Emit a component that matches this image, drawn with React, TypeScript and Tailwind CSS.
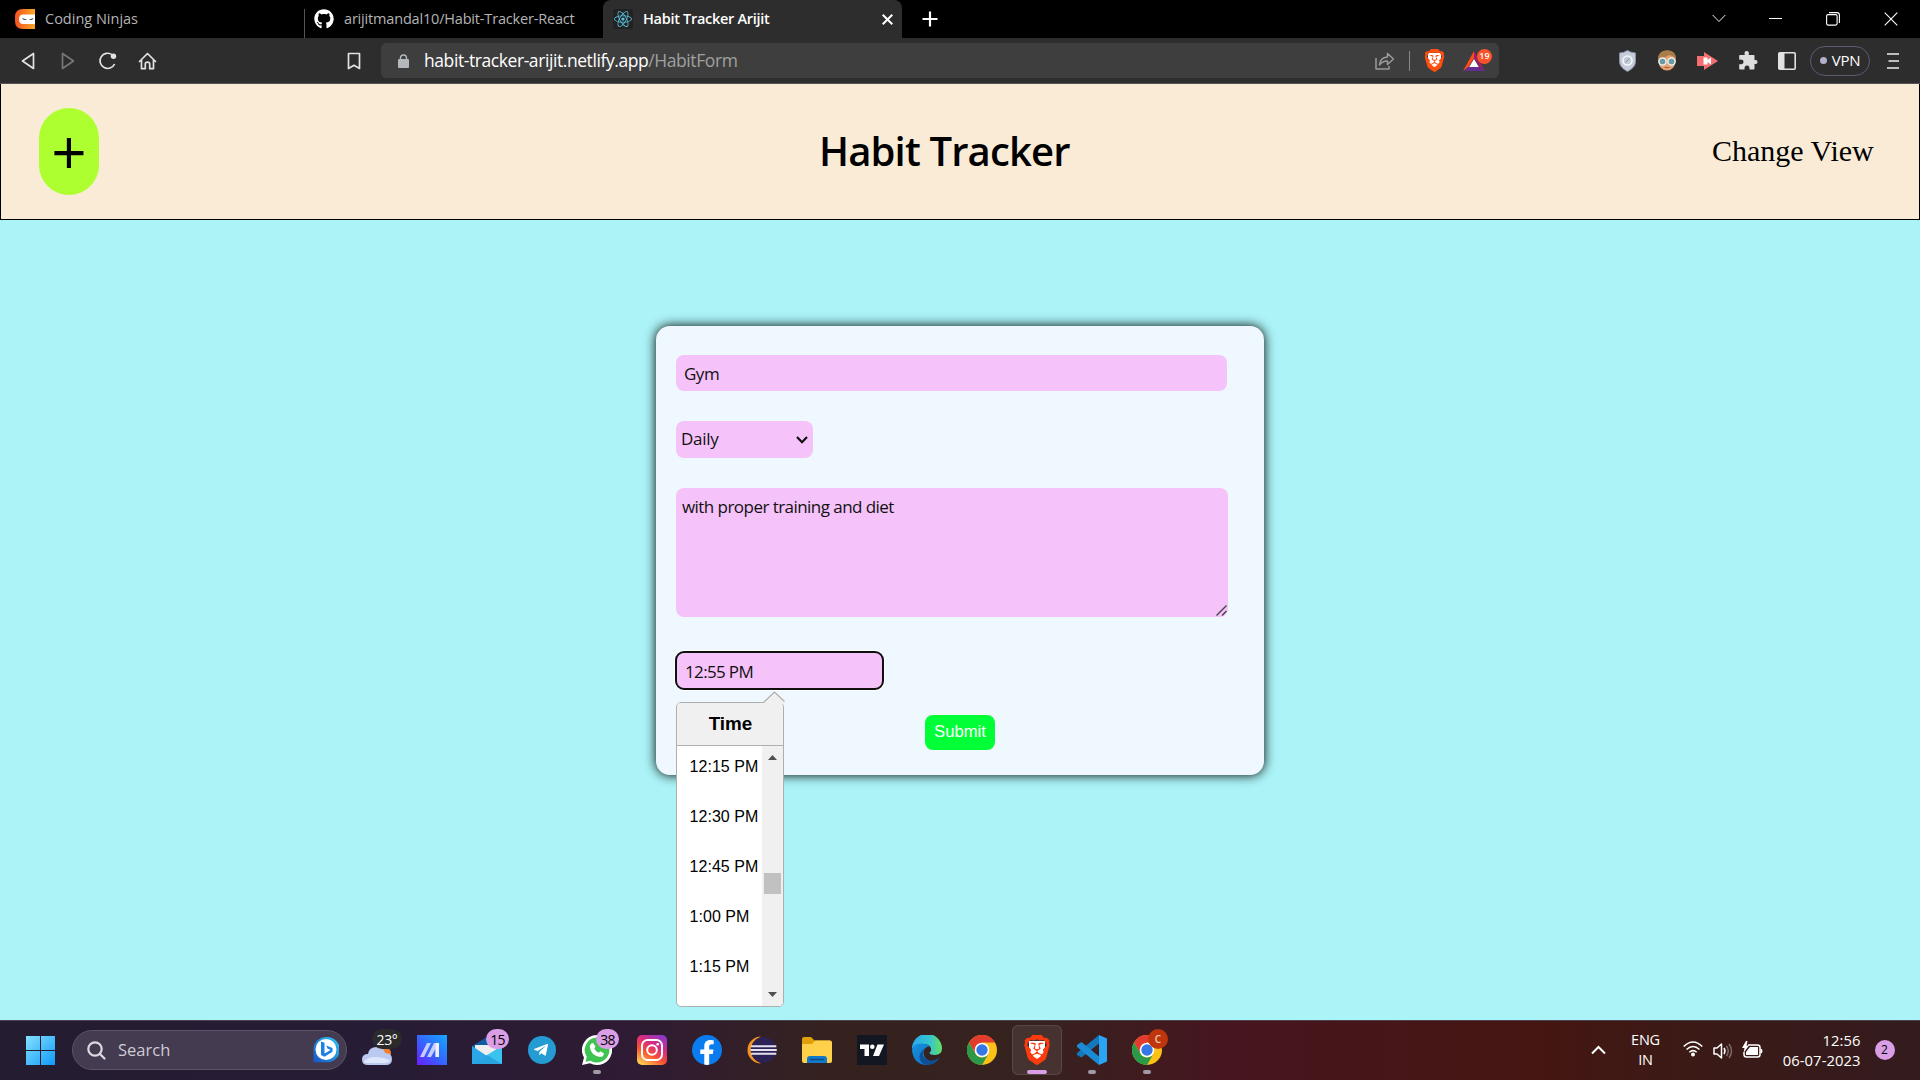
import type { ReactNode } from "react";
import { FaGithub, FaReact, FaTelegramPlane, FaFacebookF } from "react-icons/fa";
import { SiBrave } from "react-icons/si";

const ui = "font-['Open_Sans','Noto_Sans',sans-serif]";

function CodingNinjasIcon() {
  return (
    <svg width="20" height="20" viewBox="0 0 20 20">
      <defs>
        <linearGradient id="cn" x1="0" x2="1"><stop offset="0" stopColor="#f4511e" /><stop offset="1" stopColor="#f9a825" /></linearGradient>
      </defs>
      <path d="M8 0h12v20H8q-8 0-8-8V8q0-8 8-8Z" fill="url(#cn)" />
      <path d="M8 5.500h12v9.500H8q-4 0-4-4.700t4-4.800Z" fill="#fff" />
      <path d="M7 9l5 1.800q-4 .6-5-1.800ZM18.500 9l-4.500 1.800q4 .6 4.500-1.800Z" fill="#222" />
    </svg>
  );
}

function TabBar() {
  return (
    <div className="flex h-[38px] bg-black text-[#b4b4b4]">
      <div className="flex w-[304px] items-center pl-[15px]">
        <CodingNinjasIcon />
        <span className="ml-[10px] text-[14.500px]">Coding Ninjas</span>
      </div>
      <div className="mt-[9px] w-px bg-[#555]" />
      <div className="flex w-[298px] items-center pl-[9px]">
        <FaGithub className="size-5 shrink-0 text-white" />
        <span className="ml-[10px] whitespace-nowrap text-[14.500px] tracking-[-0.180px]">arijitmandal10/Habit-Tracker-React</span>
      </div>
      <div className="flex w-[299px] items-center rounded-t-lg bg-[#2d2d2d] pl-[10px] text-white">
        <div className="flex size-5 items-center justify-center rounded-xs bg-[#222]">
          <FaReact className="size-[18px] text-[#5bc4dc]" />
        </div>
        <span className="ml-[10px] w-[239px] text-[14.500px] font-semibold tracking-[-0.300px]">Habit Tracker Arijit</span>
        <svg width="11" height="11" viewBox="0 0 11 11" stroke="#fff" strokeWidth="2"><path d="M.7.7l9.600 9.600M10.300.7L.7 10.300" /></svg>
      </div>
      <svg className="mt-[11px] ml-5" width="16" height="16" viewBox="0 0 16 16" stroke="#fff" strokeWidth="2.200"><path d="M8 .5v15M.5 8h15" /></svg>
      <svg className="mt-[14px] ml-[774px]" width="14" height="9" viewBox="0 0 14 9" fill="none" stroke="#eee"><path d="M.7 1l6.300 6.500L13.300 1" /></svg>
      <svg className="mt-[12px] ml-[43px]" width="13" height="14" viewBox="0 0 13 14" stroke="#fff"><path d="M0 6.500h13" /></svg>
      <svg className="mt-[12px] ml-[44px]" width="14" height="14" viewBox="0 0 14 14" fill="none" stroke="#fff" strokeWidth="1.100">
        <rect x=".6" y="2.600" width="10.500" height="10.500" rx="1.500" />
        <path d="M3 .6h8q2.400 0 2.400 2.400v8" />
      </svg>
      <svg className="mt-[12px] ml-[44px]" width="14" height="14" viewBox="0 0 14 14" stroke="#fff" strokeWidth="1.100"><path d="M.7.7l12.600 12.600M13.300.7L.7 13.300" /></svg>
    </div>
  );
}

function Toolbar() {
  return (
    <div className="flex h-[46px] items-center border-b border-[#555] bg-[#2d2d2d]">
      <svg className="ml-[21px] shrink-0" width="14" height="18" viewBox="0 0 14 18" fill="none" stroke="#e2e2e2" strokeWidth="1.700" strokeLinejoin="round"><path d="M12.500 1.500v15L1.500 9Z" /></svg>
      <svg className="ml-[26px] shrink-0" width="14" height="18" viewBox="0 0 14 18" fill="none" stroke="#777" strokeWidth="1.700" strokeLinejoin="round"><path d="M1.500 1.500v15L12.500 9Z" /></svg>
      <svg className="ml-[24px] shrink-0" width="18" height="18" viewBox="0 0 18 18" fill="none" stroke="#e2e2e2" strokeWidth="1.700">
        <path d="M13 2.600A7.600 7.600 0 1 0 15.600 12" /><circle cx="14.500" cy="4.300" r="2.700" fill="#e2e2e2" stroke="none" />
      </svg>
      <svg className="ml-[21px] shrink-0" width="19" height="18" viewBox="0 0 19 18" fill="none" stroke="#e2e2e2" strokeWidth="1.700" strokeLinejoin="round" strokeLinecap="round">
        <path d="M1.500 9.500l8-8 8 8M3.500 8v8.700h3.800V12q0-1.800 2.200-1.800t2.200 1.800v4.700h3.800V8" />
      </svg>
      <svg className="ml-[190px] shrink-0" width="14" height="18" viewBox="0 0 14 18" fill="none" stroke="#e2e2e2" strokeWidth="1.700" strokeLinejoin="round"><path d="M1.500 1.500h11v15L7 13.300 1.500 16.500Z" /></svg>
      <div className="ml-5 flex h-[35px] w-[1118px] shrink-0 items-center rounded-[5px] bg-[#3e3e3e] pl-[17px]">
        <svg width="11" height="14" viewBox="0 0 11 14" fill="none"><rect y="5" width="11" height="9" rx="1" fill="#b4b8bc" /><path d="M2.500 6V3.800q0-2.800 3-2.800t3 2.800V6" stroke="#b4b8bc" strokeWidth="1.400" /></svg>
        <span className="ml-[15px] w-[951px] text-[17.500px] tracking-[-0.420px] text-white">
          habit-tracker-arijit.netlify.app<span className="text-[#a0a0a0]">/HabitForm</span>
        </span>
        <svg width="20" height="18" viewBox="0 0 20 18" fill="none" stroke="#9b9b9b" strokeWidth="1.500" strokeLinejoin="round">
          <path d="M1 6v11h13v-3" /><path d="M4.500 13Q5 5.500 12.500 5V1.500l6 5.500-6 5.500V9Q7.500 8.800 4.500 13Z" />
        </svg>
        <div className="ml-[14px] h-5 w-px bg-[#888]" />
        <div className="relative ml-[13px] size-[23px] shrink-0">
          <div className="absolute top-[4px] left-[5px] h-[14px] w-[13px] bg-white" />
          <SiBrave className="relative size-[23px] text-[#ff4f0f]" />
        </div>
        <div className="relative ml-[17px] h-[20px] w-[22px] shrink-0">
          <svg width="22" height="20" viewBox="0 0 24 20" preserveAspectRatio="none"><path d="M12 0L0 20l6-4 6-9Z" fill="#ff4a1c" /><path d="M12 0l12 20-6-4-6-9Z" fill="#9e1f63" /><path d="M0 20h24l-6-4H6Z" fill="#662d91" /><path d="M12 8l5.200 8H6.800Z" fill="#fff" /></svg>
          <span className="absolute -top-[2px] left-[14px] flex size-[15px] items-center justify-center rounded-full bg-[#fb542b] text-[9px] font-semibold text-white">19</span>
        </div>
      </div>
      <svg className="ml-[120px] shrink-0" width="17" height="22" viewBox="0 0 17 22"><path d="M8.500.5Q12 2.800 16.500 3v8.500q0 6-8 10-8-4-8-10V3Q5 2.800 8.500.5Z" fill="#c5cbd9" stroke="#8891a8" /><circle cx="8.500" cy="10.500" r="4.500" fill="none" stroke="#f4f6fb" strokeWidth="1.600" /><path d="M6.500 12.500l4-4" stroke="#8790a5" /></svg>
      <svg className="ml-[21px] shrink-0" width="20" height="21" viewBox="0 0 20 21"><path d="M1.500 12Q0 1 10 .5 20 1 18.500 12Q17 20.500 10 20.500T1.500 12Z" fill="#e0a274" /><path d="M1 10Q.5 1 10 .5T19 10q-1-4-7-5-4 3-11 5Z" fill="#a97d48" /><circle cx="5.500" cy="11.500" r="3.600" fill="#699ba5" stroke="#eee" strokeWidth="1.500" /><circle cx="14.500" cy="11.500" r="3.600" fill="#699ba5" stroke="#eee" strokeWidth="1.500" /><path d="M7.500 17.500h5" stroke="#b45e42" /></svg>
      <svg className="ml-[20px] shrink-0" width="21" height="20" viewBox="0 0 21 20"><path d="M0 5h7V1l14 9-14 9v-4H0Z" fill="#f36f70" /><path d="M6.500 6.500h4V9L14 6.500v7L10.500 11v2.500h-4Z" fill="#fff" /></svg>
      <svg className="ml-[20px] shrink-0" width="20" height="21" viewBox="0 0 20 21"><path d="M2 5h4.800Q5.800 1 8.700 1t2 4h5q.8 0 .8.800v4.500Q19.500 9.400 19.500 12t-3 1.800v5q0 .8-.8.800h-4.200Q11.800 15.500 9 15.500T6.500 19.600H2q-.8 0-.8-.8v-4.500q4.300.3 4.300-2.400T1.200 9.700V5.800Q1.200 5 2 5Z" fill="#dedede" /></svg>
      <svg className="ml-[20px] shrink-0" width="18" height="18" viewBox="0 0 18 18"><rect x=".8" y=".8" width="16.400" height="16.400" rx="1" fill="none" stroke="#e2e2e2" strokeWidth="1.600" /><path d="M1 1h5.500v16H1Z" fill="#e2e2e2" /></svg>
      <div className="ml-[14px] flex h-[30px] w-[60px] shrink-0 items-center justify-center gap-[5px] rounded-full border border-[#5d5b73] text-[15px] tracking-[-0.300px] text-white">
        <span className="size-[7px] rounded-full bg-[#b3b0cc]" />VPN
      </div>
      <svg className="ml-[17px] shrink-0" width="12" height="16" viewBox="0 0 12 16" stroke="#eee" strokeWidth="1.700"><path d="M0 1h12M1.500 8H12M0 15h12" /></svg>
    </div>
  );
}

function Header() {
  return (
    <header className="flex h-[136px] items-center border-x border-b border-black bg-[#faebd7] text-black">
      <button className="ml-[38px] flex h-[87px] w-[60px] items-center justify-center rounded-[30px] bg-[#adff2f] text-[62px] leading-none">
        <span className="pb-[1px]">+</span>
      </button>
      <h1 className="ml-[720px] w-[800px] pb-[1px] text-[40px] font-semibold tracking-[-0.850px]">Habit Tracker</h1>
      <span className="ml-[93px] whitespace-nowrap pb-[2px] font-['Liberation_Serif',serif] text-[30px]">Change View</span>
    </header>
  );
}

const times = ["12:15 PM", "12:30 PM", "12:45 PM", "1:00 PM", "1:15 PM"];

function TimePicker() {
  return (
    <div className="absolute top-[51px] left-px h-[305px] w-[108px] rounded-[5px] border border-[#aeaeae] bg-white font-['Liberation_Sans',sans-serif] text-black">
      <svg className="absolute -top-[12px] left-[86px]" width="22" height="13" viewBox="0 0 22 13"><path d="M1 11.500L11.500 1 21 10.500v2.500H1Z" fill="#f0f0f0" /><path d="M1 11L11.500 1 21.500 10.500" fill="none" stroke="#aeaeae" strokeWidth="1.200" /></svg>
      <div className="flex h-[43px] items-center justify-center rounded-t-[4px] border-b border-[#aeaeae] bg-[#f0f0f0] pl-px text-[18.880px] font-bold tracking-normal">Time</div>
      <div className="flex h-[260px]">
        <ul className="w-[85px] overflow-hidden pt-[5px]">
          {times.map((t) => (
            <li key={t} className="h-[50px] pl-[12.500px] text-base leading-[31px] tracking-[0.050px] whitespace-nowrap">{t}</li>
          ))}
        </ul>
        <div className="flex w-[21px] flex-col items-center rounded-br-[4px] bg-[#f0f0f0] pt-[9px]">
          <svg width="9" height="5" viewBox="0 0 9 5"><path d="M4.500 0L9 5H0Z" fill="#505050" /></svg>
          <div className="mt-[113px] h-[21px] w-[17px] bg-[#c1c1c1]" />
          <svg className="mt-[98px]" width="9" height="5" viewBox="0 0 9 5"><path d="M4.500 5L0 0h9Z" fill="#505050" /></svg>
        </div>
      </div>
    </div>
  );
}

function HabitForm() {
  return (
    <form className="mt-[106px] ml-[656px] h-[449px] w-[608px] rounded-[14px] bg-[#f0f8ff] px-5 pt-[29px] text-[17px] text-[#111] shadow-[0_0_12px_#000]">
      <div className="flex h-9 w-[551px] items-center rounded-lg bg-[#f5c2fa] pt-px pl-2 tracking-[-0.500px]">Gym</div>
      <div className="mt-[30px] flex h-[37px] w-[137px] items-center justify-between rounded-lg bg-[#f5c2fa] pr-[5px] pl-[5px] tracking-[-0.300px]">
        <span className="pb-px">Daily</span>
        <svg width="12" height="8" viewBox="0 0 12 8" fill="none" stroke="#111" strokeWidth="2.200"><path d="M1 1l5 5.200L11 1" /></svg>
      </div>
      <div className="relative mt-[30px] h-[129px] w-[552px] rounded-lg bg-[#f5c2fa] pt-[6px] pl-[6px] tracking-[-0.550px]">
        with proper training and diet
        <svg className="absolute right-[1px] bottom-[1px]" width="11" height="11" viewBox="0 0 11 11" stroke="#444" strokeWidth="1.400"><path d="M.5 10.500l10-10M6 10.500l4.500-4.500" /></svg>
      </div>
      <div className="relative mt-[34px] -ml-px h-[39px] w-[209px] rounded-[9px] border-2 border-[#101010] bg-[#f5c2fa] pt-[6px] pl-[8px] tracking-[-0.650px] shadow-[0_0_0_1px_#fff]">
        12:55 PM
        <div className="absolute -top-[2px] -left-[2px]"><TimePicker /></div>
      </div>
      <button className="mx-auto mt-[25px] block h-[35px] w-[70px] rounded-lg bg-[#00ff37] pb-[3px] font-['Liberation_Sans',sans-serif] text-[16.670px] text-white">Submit</button>
    </form>
  );
}

function Badge({ children }: { children: ReactNode }) {
  return <span className="absolute -top-[6px] left-[14px] flex h-5 min-w-[23px] items-center justify-center rounded-full bg-[#da9ee6] px-[4px] text-[14px] tracking-[-0.800px] text-black">{children}</span>;
}

function Slot({ children, running, active }: { children: ReactNode; running?: boolean; active?: boolean }) {
  return (
    <div className="flex h-[60px] w-[55px] shrink-0 justify-center">
      <div className={active ? "relative mt-[5px] flex h-[50px] w-[50px] justify-center rounded-md border border-white/10 bg-white/8 pt-[9px]" : "relative mt-[5px] flex h-[50px] w-[50px] justify-center pt-[10px]"}>
        <div className="relative size-[30px]">{children}</div>
        {active && <span className="absolute bottom-0 h-1 w-5 rounded-full bg-[#da9ee6]" />}
        {running && <span className="absolute bottom-[1px] h-1 w-2 rounded-full bg-[#a19aa5]" />}
      </div>
    </div>
  );
}

function Chrome() {
  return (
    <svg width="30" height="30" viewBox="0 0 30 30">
      <circle cx="15" cy="15" r="15" fill="#fbc116" />
      <path d="M2 7.500A15 15 0 0 1 28 7.500H15L8.500 18.800Z" fill="#e33b2e" />
      <path d="M2 7.500L8.500 18.750A7.500 7.500 0 0 0 21.500 18.750L15 30A15 15 0 0 1 2 7.500Z" fill="#2a9a48" />
      <circle cx="15" cy="15" r="7.300" fill="#fff" />
      <circle cx="15" cy="15" r="5.700" fill="#3578e5" />
    </svg>
  );
}

function TaskbarApps() {
  return (
    <div className="flex">
      <Slot>
        <svg width="30" height="30" viewBox="0 0 30 30"><defs><linearGradient id="asus" x1="0" y1="1" x2="1" y2="0"><stop stopColor="#6a1cff" /><stop offset=".5" stopColor="#3368ff" /><stop offset="1" stopColor="#13a8ff" /></linearGradient></defs><rect width="30" height="30" fill="url(#asus)" /><path d="M3 22L10 8h4L7 22ZM10 22L17 8h5v14h-3.500V14L14 22Z" fill="#c5ccff" /><path d="M18.500 8H22v14h-3.500Z" fill="#fff" opacity=".7" /></svg>
      </Slot>
      <Slot>
        <svg width="30" height="30" viewBox="0 0 30 30"><path d="M0 11L15 2l15 9v8H0Z" fill="#0f5b9f" /><path d="M3 10h24v12H3Z" fill="#eee" /><path d="M0 11l15 10 15-10v18H0Z" fill="#2aa7e8" /><path d="M0 29l30-18v18Z" fill="#39c3ee" /><path d="M15 20l15 9H0Z" fill="#1f8fd8" opacity=".6" /></svg>
        <Badge>15</Badge>
      </Slot>
      <Slot>
        <div className="mt-[1px] ml-[1px] flex size-7 items-center justify-center rounded-full bg-[#249bd2] pr-[2px]"><FaTelegramPlane className="size-4 text-white" /></div>
      </Slot>
      <Slot running>
        <svg width="30" height="30" viewBox="0 0 30 30"><path d="M15 0a15 15 0 1 1-7 28.200L0 30l2-7.500A15 15 0 0 1 15 0Z" fill="#fff" /><path d="M15 2.500a12.500 12.500 0 1 1-6.500 23.200L3.500 26.800l1.300-4.900A12.500 12.500 0 0 1 15 2.500Z" fill="#3fc351" /></svg>
        <svg className="absolute top-[7px] left-[7px]" width="16" height="16" viewBox="0 0 16 16"><path d="M4 1l2.500 3.500-1.200 2q1.200 2.800 4.200 4.200l2-1.400L15 11.500q-.5 3.500-4 3.500Q2 13.500.8 5 .8 1.500 4 1Z" fill="#fff" /></svg>
        <Badge>38</Badge>
      </Slot>
      <Slot>
        <svg width="30" height="30" viewBox="0 0 30 30"><defs><linearGradient id="ig" x1=".2" y1="1" x2=".8" y2="0"><stop stopColor="#ffd04f" /><stop offset=".35" stopColor="#fa5330" /><stop offset=".65" stopColor="#d82b7e" /><stop offset="1" stopColor="#8a3ac8" /></linearGradient></defs><rect width="30" height="30" rx="5" fill="url(#ig)" /><g fill="none" stroke="#fff" strokeWidth="2"><rect x="5" y="5" width="20" height="20" rx="5.500" /><circle cx="15" cy="15" r="4.800" /></g><circle cx="20.700" cy="9.300" r="1.300" fill="#fff" /></svg>
      </Slot>
      <Slot>
        <div className="flex size-[30px] items-end justify-center overflow-hidden rounded-full bg-[#0a7cf0]"><FaFacebookF className="h-[25px] w-[22px] text-white" /></div>
      </Slot>
      <Slot>
        <svg width="30" height="30" viewBox="0 0 30 30"><path d="M14 1.500a13.500 13.500 0 0 0 0 27Q4 24 4 15T14 1.500Z" fill="#f7941e" /><circle cx="16.500" cy="15" r="12.800" fill="#2c2255" /><path d="M4 11.300h25.300M3.500 15h26.300M4 18.700h25.300" stroke="#e4e0ee" strokeWidth="2" /></svg>
      </Slot>
      <Slot>
        <svg width="30" height="30" viewBox="0 0 30 30"><path d="M0 4q0-2 2-2h7l3.500 3.500H28V10H0Z" fill="#e0a008" /><path d="M0 9h10l3-3.500h15q2 0 2 2V26q0 2-2 2H2q-2 0-2-2Z" fill="#ffd04a" /><path d="M5 28v-4q0-3 3-3h14q3 0 3 3v4Z" fill="#1278c8" /><path d="M8.500 24.500h13" stroke="#0a4c88" strokeWidth="1.300" strokeLinecap="round" /></svg>
      </Slot>
      <Slot>
        <svg width="30" height="30" viewBox="0 0 30 30"><path fill="#131722" d="M0 0h30v30H0Z" /><path d="M3 9.500h9V21H7.500V14H3ZM20.500 9.500H27L22 21h-6Z" fill="#fff" /><circle cx="15.300" cy="11.800" r="2.300" fill="#fff" /></svg>
      </Slot>
      <Slot>
        <svg width="30" height="30" viewBox="0 0 30 30"><defs><linearGradient id="e1"><stop stopColor="#28a8ea" /><stop offset=".6" stopColor="#35c5d0" /><stop offset="1" stopColor="#66e15c" /></linearGradient><linearGradient id="e2" x1="0" y1="0" x2="1" y2="1"><stop stopColor="#1594df" /><stop offset="1" stopColor="#1268bd" /></linearGradient></defs><path d="M0 14A15 15 0 0 1 30 13.500Q30 20 23 20q-5.500 0-5.500-2.200 2-1.500 1.500-4.300-1-4.500-8-4.500Q3 9 0 14Z" fill="url(#e1)" /><path d="M0 14.500Q2 8.500 9 8.500q5.500 0 8.500 3-6 .5-6 6.500 1 8 10 9Q17 30 14 30 1 29 0 14.500Z" fill="url(#e2)" /><path d="M12 14q-3 6 2 10.500 6 3 13.500-2-4 7.500-12 7.500-7.500-1-8-8Q8 16.500 12 14Z" fill="#0e4f96" /></svg>
      </Slot>
      <Slot><Chrome /></Slot>
      <Slot active>
        <div className="absolute top-[6px] left-[7px] h-[18px] w-4 bg-white" />
        <SiBrave className="relative size-[30px] text-[#fb3a10]" />
      </Slot>
      <Slot running>
        <svg width="30" height="30" viewBox="0 0 30 30"><path d="M22 0v8.500L4.500 22.500 0 20v-2Z" fill="#1478be" /><path d="M0 10l4.500-3L22 21.500V30L0 12Z" fill="#1b8bd4" /><path d="M22 0l8 3.500v23L22 30Z" fill="#2ba4f2" /></svg>
      </Slot>
      <Slot running>
        <Chrome />
        <span className="absolute -top-[6px] left-4 flex size-5 items-center justify-center rounded-full bg-[#bf360c] text-[10px] font-semibold text-[#eecabc]">C</span>
      </Slot>
    </div>
  );
}

function Taskbar() {
  return (
    <footer className="flex h-[60px] border-t border-[#4b4350] bg-[linear-gradient(90deg,#241c31_0%,#271c35_20%,#2f1b33_33%,#35221f_43%,#36221f_54%,#47151f_64%,#451612_80%,#3b1a16_88%,#331b1e_100%)] text-white">
      <svg className="mt-[15px] ml-[26px] shrink-0" width="29" height="29" viewBox="0 0 29 29"><defs><linearGradient id="win" x1="0" y1="0" x2="1" y2="1"><stop stopColor="#85e0ff" /><stop offset="1" stopColor="#0e9bf8" /></linearGradient></defs><path d="M0 0h14v14H0ZM15 0h14v14H15ZM0 15h14v14H0ZM15 15h14v14H15Z" fill="url(#win)" /></svg>
      <div className="mt-[9px] ml-[17px] flex h-10 w-[275px] shrink-0 items-center rounded-full border border-[#5c5366] bg-[#443b50] pl-[14px]">
        <svg width="19" height="19" viewBox="0 0 19 19" fill="none" stroke="#dcdae0" strokeWidth="2.200" strokeLinecap="round"><circle cx="8" cy="8" r="6.700" /><path d="M13 13l4.500 4.500" /></svg>
        <span className="ml-[12px] w-[195px] text-[16.500px] text-[#cfccd4]">Search</span>
        <svg width="26" height="26" viewBox="0 0 26 26"><defs><linearGradient id="bing" x1="0" y1="1" x2="1" y2="0"><stop stopColor="#1554c8" /><stop offset="1" stopColor="#31c4f0" /></linearGradient></defs><path d="M13 0a12.700 12.700 0 1 1 0 25.300H.5V13A12.500 12.500 0 0 1 13 0Z" fill="url(#bing)" /><circle cx="13" cy="12.500" r="10.500" fill="#fff" /><path d="M8 4.500l3.500 1.300v10.700l6-3.500-3-1.500-1.300-3 6.300 2.500v3.800l-8 5L8 18Z" fill="#1e7fe4" /></svg>
      </div>
      <div className="relative ml-[15px] h-[59px] w-[42.500px] shrink-0">
        <svg className="absolute top-[24px] left-0" width="30" height="20" viewBox="0 0 30 20"><circle cx="24" cy="8" r="5" fill="#f08030" /><path d="M6 20q-6 0-6-5.500T6 9q1-7 8.500-7T23 8q7 0 7 6t-6 6Z" fill="#b9c9f0" /><path d="M6 18q-4 0-4-2 5-4 11-4 8 0 15 3-1 3-5 3Z" fill="#dee7fb" /></svg>
        <span className="absolute top-[8px] left-[10px] flex h-5 w-[30px] items-center justify-center rounded-full bg-[#2b2b2b] text-[14px] tracking-[-0.300px]">23°</span>
      </div>
      <div className="-mt-px"><TaskbarApps /></div>
      <svg className="mt-[24px] ml-[416px] shrink-0" width="15" height="10" viewBox="0 0 15 10" fill="none" stroke="#fff" strokeWidth="2"><path d="M1 8.500L7.500 2 14 8.500" /></svg>
      <div className="mt-[9px] ml-[20px] w-[40px] text-center text-[14.500px] leading-5 tracking-[-0.200px]">ENG<br />IN</div>
      <svg className="mt-[20px] ml-[17px] shrink-0" width="20" height="16" viewBox="0 0 20 16" fill="none" stroke="#fff" strokeWidth="1.500"><path d="M.7 5.500Q10-3.500 19.300 5.500M3.500 8.500q6.500-6 13 0M6.300 11.300q3.700-3.300 7.400 0" /><circle cx="10" cy="13.500" r="2" fill="#fff" stroke="none" /></svg>
      <svg className="mt-[21px] ml-[10px] shrink-0" width="20" height="18" viewBox="0 0 20 18" fill="none" stroke="#fff" strokeWidth="1.500" strokeLinejoin="round"><path d="M1 6h3l4.500-4v14L4 12H1Z" /><path d="M11 6q2 3 0 6" /><path d="M13.500 4q3.500 5 0 10M16 2q5 7 0 14" opacity=".35" /></svg>
      <svg className="mt-[20px] ml-[9px] shrink-0" width="21" height="18" viewBox="0 0 21 18"><path d="M6 4h9.500q2.500 0 2.500 2.500v7q0 2.500-2.500 2.500h-11Q2 16 2 13.500V11" fill="none" stroke="#fff" strokeWidth="1.500" /><path d="M8 6h8v8H4v-3Z" fill="#fff" /><path d="M18.500 7.500q2 0 2 2.500t-2 2.500Z" fill="#fff" /><path d="M4 0L0 7h2.500L1.500 12 7 4.500H4.500L5.500 0Z" fill="#fff" /></svg>
      <div className="mt-[9px] ml-[12px] w-[86px] text-right text-[14.800px] leading-5 tracking-[0.050px] whitespace-nowrap">12:56<br />06-07-2023</div>
      <span className="mt-[19px] ml-[14px] flex size-5 items-center justify-center rounded-full bg-[#da9ee6] text-[12px] text-black">2</span>
    </footer>
  );
}

export default function App() {
  return (
    <div className={`flex h-[1080px] w-[1920px] flex-col overflow-hidden bg-[#abf3f7] ${ui}`}>
      <TabBar />
      <Toolbar />
      <main className="h-[936px]">
        <Header />
        <HabitForm />
      </main>
      <Taskbar />
    </div>
  );
}
